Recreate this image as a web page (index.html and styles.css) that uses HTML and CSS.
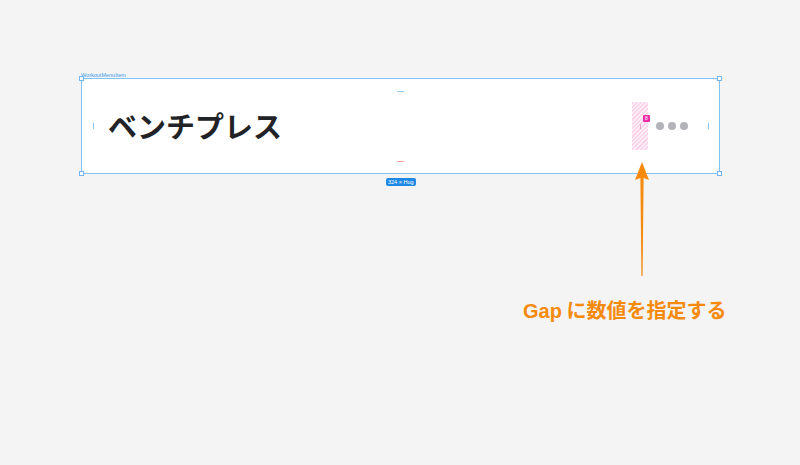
FILE: index.html
```html
<!DOCTYPE html>
<html lang="ja">
<head>
    <meta charset="UTF-8">
    <title>WorkoutMenuItem</title>
    <link rel="stylesheet" href="styles.css">
</head>
<body>
<div class="canvas">
    <div class="frame-name">WorkoutMenuItem</div>
    <div class="frame">
        <div class="card">
            <div class="title">ベンチプレス</div>
            <div class="actions">
                <div class="gap-area">
                    <span class="gap-badge">8</span>
                    <span class="gap-tick"></span>
                </div>
                <div class="dots">
                    <span class="dot"></span>
                    <span class="dot"></span>
                    <span class="dot"></span>
                </div>
            </div>
        </div>
        <span class="pad pad-top"></span>
        <span class="pad pad-bottom"></span>
        <span class="pad pad-left"></span>
        <span class="pad pad-right"></span>
        <span class="handle h-tl"></span>
        <span class="handle h-tr"></span>
        <span class="handle h-bl"></span>
        <span class="handle h-br"></span>
        <div class="size-tag">324 × Hug</div>
    </div>
    <svg class="arrow" width="20" height="116" viewBox="0 0 20 116">
        <path d="M10 0 L17 18 L11.6 16 L10.6 114 L9.4 114 L8.4 16 L3 18 Z" fill="#f68a0c"/>
    </svg>
    <div class="caption"><span class="caption-latin">Gap</span> に数値を指定する</div>
</div>
</body>
</html>
```

FILE: styles.css
```css
html, body{
    margin: 0;
    padding: 0;
}
body{
    background: #f4f4f4;
    font-family: "Noto Sans CJK JP", "Noto Sans", sans-serif;
}
.canvas{
    width: 800px;
    height: 465px;
    position: relative;
    overflow: hidden;
}
.frame-name{
    position: absolute;
    left: 81px;
    top: 72px;
    font-family: "Liberation Sans", sans-serif;
    font-size: 5.5px;
    line-height: 6px;
    color: #3d9be9;
}
.frame{
    position: absolute;
    left: 81px;
    top: 78px;
    width: 637px;
    height: 94px;
    border: 1px solid #82c3f6;
}
.card{
    height: 100%;
    background: #fff;
    border-radius: 8px;
    display: flex;
    align-items: center;
    justify-content: space-between;
    padding: 0 31px 0 26px;
    box-sizing: border-box;
}
.title{
    font-size: 29px;
    font-weight: 700;
    color: #222326;
    line-height: 1;
    margin-top: -1px;
}
.actions{
    display: flex;
    align-items: center;
    gap: 8px;
}
.gap-area{
    width: 16px;
    height: 48px;
    position: relative;
    background: repeating-linear-gradient(135deg, #fbd3ea 0 1.5px, #fff0f8 1.5px 3px);
}
.gap-badge{
    position: absolute;
    right: -2px;
    top: 13px;
    width: 7px;
    height: 7px;
    background: #ef2ba8;
    color: #fff;
    font-family: "Liberation Sans", sans-serif;
    font-size: 5px;
    line-height: 7px;
    text-align: center;
    border-radius: 1px;
}
.gap-tick{
    position: absolute;
    left: 8px;
    top: 22px;
    width: 1px;
    height: 5px;
    background: #e8a2c8;
}
.dots{
    display: flex;
    gap: 4px;
}
.dot{
    width: 8px;
    height: 8px;
    border-radius: 50%;
    background: #b3b4b9;
}
.pad{
    position: absolute;
    background: #8ec8f6;
}
.pad-top{
    left: 315px;
    top: 12px;
    width: 7px;
    height: 1px;
}
.pad-bottom{
    left: 315px;
    bottom: 11px;
    width: 7px;
    height: 1px;
    background: #f0a89a;
}
.pad-left{
    left: 11px;
    top: 44px;
    width: 1px;
    height: 6px;
}
.pad-right{
    right: 10px;
    top: 44px;
    width: 1px;
    height: 6px;
}
.handle{
    position: absolute;
    width: 3px;
    height: 3px;
    background: #fff;
    border: 1px solid #6fb6f2;
}
.h-tl{ left: -3px; top: -3px; }
.h-tr{ right: -3px; top: -3px; }
.h-bl{ left: -3px; bottom: -3px; }
.h-br{ right: -3px; bottom: -3px; }
.size-tag{
    position: absolute;
    left: 304px;
    top: 99px;
    padding: 0 2px;
    background: #1e88e5;
    color: #fff;
    font-family: "Liberation Sans", sans-serif;
    font-size: 5.5px;
    line-height: 8px;
    border-radius: 2px;
}
.arrow{
    position: absolute;
    left: 632px;
    top: 162px;
}
.caption{
    position: absolute;
    left: 523px;
    top: 296px;
    font-size: 20px;
    font-weight: 700;
    color: #f68a0c;
    line-height: 28px;
    white-space: nowrap;
}
.caption-latin{
    font-family: "Liberation Sans", sans-serif;
    font-size: 20px;
}
```
